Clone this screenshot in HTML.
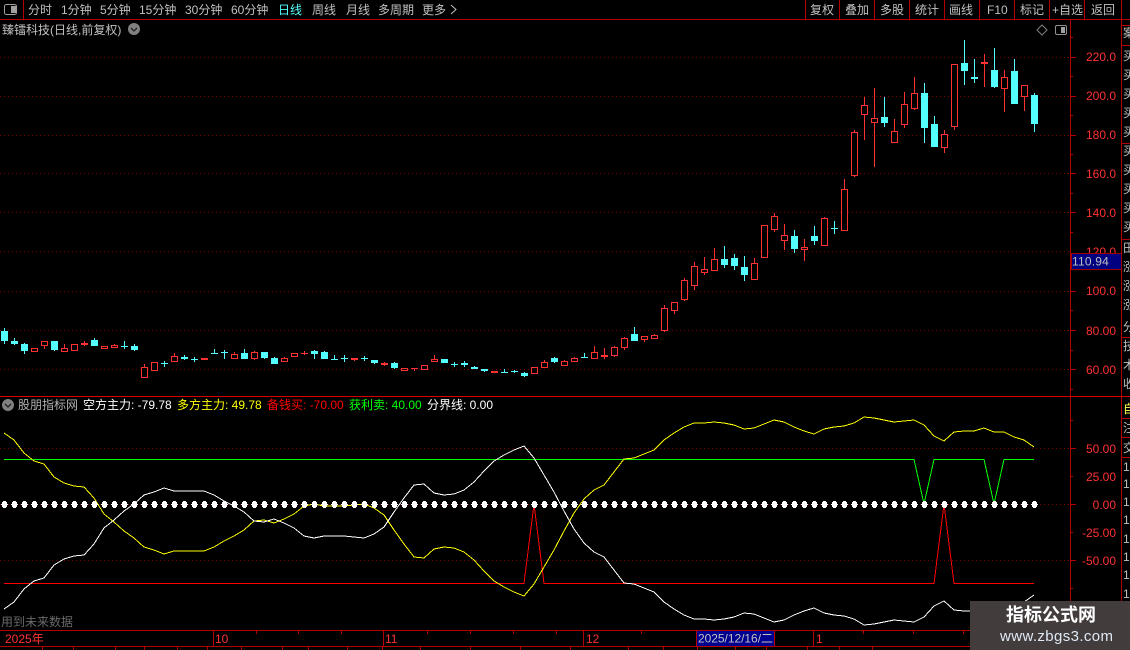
<!DOCTYPE html>
<html><head><meta charset="utf-8"><style>
html,body{margin:0;padding:0;background:#000;overflow:hidden}
svg{display:block}
text{font-family:"Liberation Sans","WenQuanYi Zen Hei","Noto Sans CJK SC",sans-serif;font-size:12px;white-space:pre}
.g{fill:#c0c0c0}.r{fill:#ff3232;text-anchor:end}
</style></head><body>
<svg width="1130" height="650" viewBox="0 0 1130 650" xmlns="http://www.w3.org/2000/svg">
<defs><clipPath id="sb"><rect x="1122" y="20" width="8" height="630"/></clipPath>
<pattern id="dots" patternUnits="userSpaceOnUse" x="0" y="501" width="10" height="7"><path fill="#fff" d="M3 0h3v1h1v2h1v1h-1v2h-1v1h-3v-1h-1v-2h-1v-1h1v-2h1z"/></pattern>
</defs>
<rect width="1130" height="650" fill="#000"/>

<!-- dotted grid -->
<g stroke="#780000" stroke-width="1" stroke-dasharray="1 3" shape-rendering="crispEdges">
<path d="M0 57.5H1070M0 96.5H1070M0 135.5H1070M0 173.5H1070M0 212.5H1070M0 251.5H1070M0 291.5H1070M0 330.5H1070M0 369.5H1070M0 448.5H1070M0 504.5H1070M0 560.5H1070"/>
</g>

<!-- frame lines -->
<g stroke="#b40000" stroke-width="1" shape-rendering="crispEdges" fill="none">
<path d="M0 19.5H1130M23.5 0V19M805.5 0V19M839.5 0V19M874.5 0V19M909.5 0V19M944.5 0V19M979.5 0V19M1014.5 0V19M1049.5 0V19M1084.5 0V19M1121.5 0V650M1070.5 20V630"/>
<path d="M0 396.5H1130" stroke="#d80000"/>
<path d="M0 630.5H1121M0 646.5H1121M213.5 631V646M383.5 631V646M583.5 631V646M813.5 631V646"/>
<path d="M256.5 631v3M298.5 631v3M341.5 631v3M427.5 631v3M470.5 631v3M513.5 631v3M556.5 631v3M641.5 631v3M863.5 631v3M913.5 631v3M963.5 631v3"/>
<path d="M42.5 646v4M73.5 646v4M115.5 646v4M144.5 646v4M177.5 646v4M207.5 646v4M241.5 646v4M282.5 646v4M308.5 646v4M347.5 646v4M382.5 646v4M420.5 646v4M470.5 646v4M520.5 646v4M570.5 646v4M628.5 646v4M663.5 646v4M697.5 646v4M735.5 646v4M766.5 646v4M807.5 646v4M839.5 646v4M872.5 646v4"/>
<!-- axis ticks -->
<path d="M1071 57.5h5M1071 96.5h5M1071 135.5h5M1071 173.5h5M1071 212.5h5M1071 291.5h5M1071 330.5h5M1071 369.5h5M1071 448.5h5M1071 504.5h5M1071 560.5h5"/>
<path d="M1071 76.5h2M1071 115.5h2M1071 154.5h2M1071 193.5h2M1071 232.5h2M1071 310.5h2M1071 350.5h2M1071 389.5h2M1071 37.5h2M1071 476.5h2M1071 532.5h2M1071 420.5h2M1071 588.5h2"/>
<!-- sidebar separators -->
<path d="M1122 25.5h8M1122 45.5h8M1122 143.5h8M1122 239.5h8M1122 337.5h8M1122 418.5h8M1122 437.5h8M1122 457.5h8"/>
</g>

<!-- toolbar -->
<rect x="4.500" y="4.500" width="12" height="10" rx="2" fill="#000" stroke="#a0a0a0"/>
<rect x="11" y="6" width="5" height="7" fill="#a0a0a0"/>
<g class="g">
<text x="28" y="14">分时</text><text x="61" y="14">1分钟</text><text x="100" y="14">5分钟</text><text x="139" y="14">15分钟</text><text x="185" y="14">30分钟</text><text x="231" y="14">60分钟</text>
<text x="278" y="14" style="fill:#54ffff">日线</text>
<text x="312" y="14">周线</text><text x="346" y="14">月线</text><text x="378" y="14">多周期</text><text x="422" y="14">更多</text>
<text x="810" y="14">复权</text><text x="845" y="14">叠加</text><text x="880" y="14">多股</text><text x="915" y="14">统计</text><text x="949" y="14">画线</text><text x="987" y="14">F10</text><text x="1020" y="14">标记</text><text x="1052" y="14">+自选</text><text x="1091" y="14">返回</text>
<text x="2" y="34">臻镭科技(日线,前复权)</text>
</g>
<path d="M451 5l5 4.500-5 4.500" fill="none" stroke="#c0c0c0"/>

<!-- title icons -->
<circle cx="134" cy="29" r="6" fill="#808080"/><path d="M131 28l3 3 3-3" fill="none" stroke="#222" stroke-width="1.300"/>
<path d="M1042 25l5 5-5 5-5-5z" fill="none" stroke="#808080"/>
<rect x="1055.500" y="25.500" width="11" height="9" rx="1.500" fill="#000" stroke="#909090"/><rect x="1061" y="27" width="4" height="6" fill="#a0a0a0"/>

<!-- candles -->
<g fill="none" stroke-width="1" shape-rendering="crispEdges">
<path stroke="#ff3232" d="M44.500 341V349M64.500 344V352M84.500 341V346M114.500 344V348M144.500 364V378M174.500 353V362M234.500 352V359M254.500 351V360M284.500 357V362M304.500 351V355M354.500 358V361M384.500 362V366M414.500 368V371M434.500 355V362M544.500 360V368M564.500 360V366M574.500 357V362M594.500 346V359M604.500 348V359M614.500 346V357M624.500 337V350M644.500 336V342M654.500 334V339M664.500 305V332M674.500 302V314M684.500 278V301M694.500 262V290M704.500 257V275M714.500 248V271M754.500 258V280M774.500 213V232M784.500 224V250M804.500 239V261M824.500 217V246M844.500 179V231M854.500 130V177M864.500 97V140M874.500 88V167M894.500 119V143M904.500 92V128M914.500 77V110M944.500 130V153M954.500 64V130M984.500 54V87M1004.500 70V112M1024.500 85V111"/>
<path stroke="#ff3232" fill="#000" d="M31.500 348.500h6v3h-6zM41.500 341.500h6v4h-6zM61.500 348.500h6v3h-6zM71.500 344.500h6v6h-6zM101.500 346.500h6v2h-6zM111.500 345.500h6v2h-6zM141.500 367.500h6v10h-6zM151.500 362.500h6v8h-6zM171.500 356.500h6v5h-6zM231.500 354.500h6v4h-6zM251.500 352.500h6v6h-6zM281.500 358.500h6v3h-6zM291.500 353.500h6v3h-6zM401.500 368.500h6v2h-6zM421.500 365.500h6v4h-6zM431.500 359.500h6v2h-6zM531.500 367.500h6v6h-6zM541.500 362.500h6v5h-6zM561.500 361.500h6v4h-6zM571.500 358.500h6v3h-6zM591.500 352.500h6v6h-6zM611.500 347.500h6v8h-6zM621.500 338.500h6v9h-6zM641.500 336.500h6v3h-6zM651.500 335.500h6v3h-6zM661.500 308.500h6v22h-6zM671.500 302.500h6v8h-6zM681.500 280.500h6v19h-6zM691.500 266.500h6v19h-6zM701.500 269.500h6v3h-6zM711.500 259.500h6v11h-6zM751.500 263.500h6v16h-6zM761.500 225.500h6v32h-6zM771.500 216.500h6v13h-6zM781.500 235.500h6v5h-6zM801.500 247.500h6v2h-6zM821.500 218.500h6v27h-6zM841.500 189.500h6v41h-6zM851.500 132.500h6v43h-6zM861.500 105.500h6v9h-6zM871.500 118.500h6v4h-6zM891.500 131.500h6v11h-6zM901.500 104.500h6v20h-6zM911.500 93.500h6v15h-6zM941.500 134.500h6v13h-6zM951.500 64.500h6v62h-6zM1001.500 77.500h6v11h-6zM1021.500 85.500h6v11h-6z"/>
<path fill="#ff3232" stroke="none" d="M81 343h7v2h-7zM201 358h7v2h-7zM301 353h7v1h-7zM351 358h7v2h-7zM381 363h7v2h-7zM411 368h7v1h-7zM491 371h7v2h-7zM601 355h7v2h-7zM981 62h7v2h-7z"/>
<path stroke="#54ffff" d="M4.500 328V344M14.500 338V345M24.500 343V354M54.500 341V351M94.500 338V346M124.500 341V349M134.500 344V351M164.500 361V367M184.500 355V360M194.500 357V362M214.500 349V354M224.500 350V359M244.500 349V359M264.500 352V359M274.500 357V364M314.500 350V359M324.500 351V359M334.500 355V360M344.500 355V362M364.500 356V361M374.500 360V364M394.500 362V369M444.500 359V363M454.500 362V367M464.500 361V367M474.500 366V369M484.500 369V372M504.500 369V373M514.500 370V373M524.500 372V377M554.500 357V363M584.500 353V358M634.500 327V341M724.500 246V268M734.500 254V270M744.500 256V281M794.500 230V253M814.500 226V245M834.500 221V234M884.500 97V127M924.500 83V143M934.500 116V147M964.500 40V85M974.500 59V83M994.500 48V88M1014.500 59V104M1034.500 93V132"/>
<path fill="#54ffff" stroke="none" d="M1 331h7v10h-7zM11 341h7v3h-7zM21 344h7v7h-7zM51 341h7v9h-7zM91 340h7v6h-7zM121 346h7v1h-7zM131 346h7v4h-7zM161 363h7v1h-7zM181 357h7v2h-7zM191 359h7v1h-7zM211 353h7v1h-7zM221 352h7v1h-7zM241 353h7v6h-7zM261 352h7v6h-7zM271 358h7v6h-7zM311 351h7v3h-7zM321 352h7v7h-7zM331 359h7v1h-7zM341 358h7v1h-7zM361 358h7v1h-7zM371 360h7v3h-7zM391 363h7v5h-7zM441 359h7v4h-7zM451 364h7v1h-7zM461 363h7v2h-7zM471 367h7v2h-7zM481 369h7v2h-7zM501 372h7v1h-7zM511 371h7v1h-7zM521 373h7v3h-7zM551 358h7v4h-7zM581 357h7v1h-7zM631 334h7v7h-7zM721 259h7v6h-7zM731 258h7v8h-7zM741 267h7v8h-7zM791 236h7v13h-7zM811 236h7v5h-7zM831 228h7v1h-7zM881 117h7v6h-7zM921 93h7v35h-7zM931 124h7v23h-7zM961 63h7v8h-7zM971 77h7v2h-7zM991 70h7v17h-7zM1011 71h7v33h-7zM1031 95h7v29h-7z"/>
</g>

<!-- axis labels upper -->
<g class="r">
<text x="1116" y="61">220.0</text><text x="1116" y="100">200.0</text><text x="1116" y="139">180.0</text><text x="1116" y="178">160.0</text><text x="1116" y="217">140.0</text><text x="1116" y="256">120.0</text><text x="1116" y="295">100.0</text><text x="1116" y="335">80.00</text><text x="1116" y="374">60.00</text>
<text x="1116" y="453">50.00</text><text x="1116" y="481">25.00</text><text x="1116" y="509">0.00</text><text x="1116" y="537">-25.00</text><text x="1116" y="565">-50.00</text>
</g>
<rect x="1071.500" y="253.500" width="50" height="16" fill="#000080" stroke="#a00000"/>
<text x="1072" y="265.500" class="g" style="letter-spacing:.2px">110.94</text>

<!-- sidebar clipped glyphs -->
<g clip-path="url(#sb)" class="g">
<text x="1123" y="37">案</text><text x="1123" y="60">买</text><text x="1123" y="79">买</text><text x="1123" y="98">买</text><text x="1123" y="117">买</text><text x="1123" y="136">买</text>
<text x="1123" y="155">买</text><text x="1123" y="174">买</text><text x="1123" y="193">买</text><text x="1123" y="212">买</text><text x="1123" y="231">买</text>
<text x="1123" y="252">田</text><text x="1123" y="271">涨</text><text x="1123" y="290">涨</text><text x="1123" y="309">涨</text><text x="1123" y="331">分</text>
<text x="1123" y="350">技</text><text x="1123" y="369">术</text><text x="1123" y="388">收</text>
<text x="1123" y="413" style="fill:#ffff54">自</text><text x="1123" y="432">注</text><text x="1123" y="452">交</text>
<text x="1123" y="471">1</text><text x="1123" y="488">1</text><text x="1123" y="506">1</text><text x="1123" y="524">1</text><text x="1123" y="543">1</text><text x="1123" y="561">1</text><text x="1123" y="579">1</text><text x="1123" y="598">1</text>
</g>

<!-- indicator title -->
<circle cx="8" cy="405" r="6" fill="#808080"/><path d="M5 404l3 3 3-3" fill="none" stroke="#222" stroke-width="1.300"/>
<text x="18" y="409" fill="#b0b0b0">股朋指标网</text>
<text x="83" y="409" fill="#fff">空方主力: -79.78</text>
<text x="177" y="409" fill="#ffff00">多方主力: 49.78</text>
<text x="267" y="409" fill="#ff0000">备钱买: -70.00</text>
<text x="349" y="409" fill="#00ff00">获利卖: 40.00</text>
<text x="427" y="409" fill="#fff">分界线: 0.00</text>

<!-- indicator lines -->
<g fill="none" stroke-width="1" shape-rendering="crispEdges">
<polyline stroke="#00ff00" points="4,459.500 914,459.500 924,504 934,459.500 984,459.500 994,504 1004,459.500 1034,459.500"/>
<polyline stroke="#ff0000" points="4,583.500 524,583.500 534,504 544,583.500 934,583.500 944,504 954,583.500 1034,583.500"/>
<polyline stroke="#ffff00" points="4,433 14,440 24,453 34,461 44,464 54,477 64,483 74,486 84,487 94,498 104,514 114,522 124,531 134,538 144,547 154,550 164,554 174,551 184,551 194,551 204,551 214,547 224,541 234,536 244,530 254,521 264,520 274,523 284,519 294,514 304,506 314,504 324,506 334,506 344,506 354,505 364,504 374,508 384,515 394,530 404,544 414,557 424,558 434,549 444,547 454,548 464,552 474,560 484,571 494,581 504,587 514,592 524,596 534,584 544,567 554,550 564,531 574,513 584,499 594,490 604,485 614,472 624,459 634,458 644,454 654,450 664,440 674,433 684,427 694,423 704,423 714,422 724,423 734,425 744,429 754,428 764,424 774,420 784,422 794,427 804,431 814,434 824,429 834,427 844,426 854,423 864,417 874,418 884,420 894,422 904,421 914,420 924,425 934,436 944,441 954,432 964,431 974,431 984,428 994,432 1004,432 1014,437 1024,440 1034,447"/>
<polyline stroke="#ffffff" points="4,609 14,602 24,589 34,581 44,578 54,565 64,559 74,556 84,555 94,544 104,528 114,520 124,511 134,504 144,495 154,492 164,488 174,491 184,491 194,491 204,491 214,495 224,501 234,506 244,512 254,521 264,522 274,519 284,523 294,528 304,536 314,538 324,536 334,536 344,536 354,537 364,538 374,534 384,527 394,512 404,498 414,485 424,484 434,493 444,495 454,494 464,490 474,482 484,471 494,461 504,455 514,450 524,446 534,458 544,475 554,492 564,511 574,529 584,543 594,552 604,557 614,570 624,583 634,584 644,588 654,592 664,602 674,609 684,615 694,619 704,619 714,620 724,619 734,617 744,613 754,614 764,618 774,622 784,620 794,615 804,611 814,608 824,613 834,615 844,616 854,619 864,625 874,624 884,622 894,620 904,621 914,622 924,617 934,606 944,601 954,610 964,611 974,611 984,614 994,610 1004,610 1014,605 1024,602 1034,595"/>
</g>
<rect x="0" y="501" width="1040" height="7" fill="url(#dots)" shape-rendering="crispEdges"/>

<text x="1" y="626" fill="#6a6a6a">用到未来数据</text>

<!-- time axis -->
<g fill="#ff3232">
<text x="5" y="643">2025年</text><text x="215" y="643">10</text><text x="385" y="643">11</text><text x="586" y="643">12</text><text x="816" y="643">1</text>
</g>
<rect x="696.500" y="630.500" width="78" height="16" fill="#000090" stroke="#b40000"/>
<text x="698" y="642.500" fill="#c0c0c0" textLength="75">2025/12/16/二</text>

<!-- watermark -->
<rect x="970" y="601" width="160" height="49" fill="#423c3c"/>
<text x="1006" y="621" fill="#fff" textLength="90" style="font-size:18px;font-weight:bold">指标公式网</text>
<text x="1000" y="641" fill="#dfe9f5" textLength="113" style="font-size:15px;font-family:'Liberation Sans',sans-serif">www.zbgs3.com</text>
</svg>
</body></html>
